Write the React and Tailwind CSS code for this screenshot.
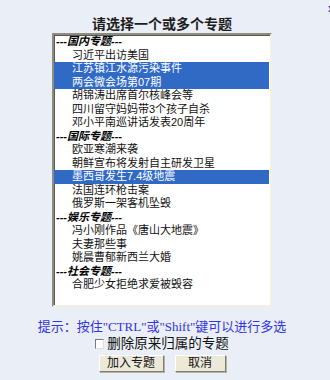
import { useState } from "react";

const groups = [
  {
    name: "国内专题",
    items: [
      "习近平出访美国",
      "江苏镇江水源污染事件",
      "两会微会场第07期",
      "胡锦涛出席首尔核峰会等",
      "四川留守妈妈带3个孩子自杀",
      "邓小平南巡讲话发表20周年",
    ],
  },
  {
    name: "国际专题",
    items: [
      "欧亚寒潮来袭",
      "朝鲜宣布将发射自主研发卫星",
      "墨西哥发生7.4级地震",
      "法国连环枪击案",
      "俄罗斯一架客机坠毁",
    ],
  },
  {
    name: "娱乐专题",
    items: ["冯小刚作品《唐山大地震》", "夫妻那些事", "姚晨曹郁新西兰大婚"],
  },
  {
    name: "社会专题",
    items: ["合肥少女拒绝求爱被毁容"],
  },
];

const cjk = { fontFamily: '"Liberation Sans", "Noto Sans CJK SC", sans-serif' };

export default function App() {
  const [selected, setSelected] = useState([
    "江苏镇江水源污染事件",
    "两会微会场第07期",
    "墨西哥发生7.4级地震",
  ]);
  const [removeOld, setRemoveOld] = useState(false);

  const toggle = (item) => {
    setSelected((s) => (s.includes(item) ? s.filter((x) => x !== item) : [...s, item]));
  };

  return (
    <div className="relative w-[330px] h-[380px] overflow-hidden bg-[#eaeef7]" style={cjk}>
      {/* cut-off close mark */}
      <span className="absolute top-[3px] right-[-4px] text-[11px] leading-[11px] font-bold text-[#3a46c8]">
        x
      </span>

      <div className="flex flex-col items-center w-[324px]">
        <h1 className="pt-[16px] text-[14px] leading-[16px] font-bold text-[#1c1c1c]">
          请选择一个或多个专题
        </h1>

        {/* list box */}
        <div className="mt-[1px] w-[220px] h-[274px] bg-white border-2 border-t-[#8c8c80] border-l-[#8c8c80] border-r-[#f2f0e4] border-b-[#f2f0e4] shadow-[inset_1px_1px_0_#5a5a50]">
          {groups.map((g) => (
            <div key={g.name}>
              <div className="h-[13.5px] leading-[13.5px] pl-[2px] text-[11px] font-bold italic text-black">
                ---{g.name}---
              </div>
              {g.items.map((item) => {
                const on = selected.includes(item);
                return (
                  <div
                    key={item}
                    onClick={() => toggle(item)}
                    className={
                      "h-[13.5px] leading-[13.5px] pl-[18px] mr-[1px] text-[11px] whitespace-nowrap cursor-default " +
                      (on ? "bg-[#316ac5] text-white" : "text-[#111]")
                    }
                  >
                    {item}
                  </div>
                );
              })}
            </div>
          ))}
        </div>

        <p
          className="mt-[12px] text-[13px] leading-[16px] text-[#3434dc] whitespace-nowrap"
          style={{ fontFamily: '"Liberation Serif", "Noto Sans CJK SC", serif' }}
        >
          提示：按住"CTRL"或"Shift"键可以进行多选
        </p>

        <label className="mt-[2px] flex items-center gap-[3px] text-[13.5px] leading-[14px] text-[#111] whitespace-nowrap cursor-default">
          <span
            onClick={() => setRemoveOld(!removeOld)}
            className="w-[9px] h-[10px] bg-white border-t border-l border-t-[#7a7a7a] border-l-[#7a7a7a] border-r border-b border-r-[#e0e0e0] border-b-[#e0e0e0] flex items-center justify-center text-[8px] leading-[8px]"
          >
            {removeOld ? "✓" : ""}
          </span>
          删除原来归属的专题
        </label>

        <div className="mt-[4px] flex gap-[11px]">
          <button className="w-[65px] h-[17px] bg-[#ece9d8] text-[12px] leading-[13px] text-[#111] border border-t-white border-l-white border-r-[#7f7d70] border-b-[#7f7d70] shadow-[1px_1px_0_#b5b3a6]">
            加入专题
          </button>
          <button className="w-[51px] h-[17px] bg-[#ece9d8] text-[12px] leading-[13px] text-[#111] border border-t-white border-l-white border-r-[#7f7d70] border-b-[#7f7d70] shadow-[1px_1px_0_#b5b3a6]">
            取消
          </button>
        </div>
      </div>
    </div>
  );
}
